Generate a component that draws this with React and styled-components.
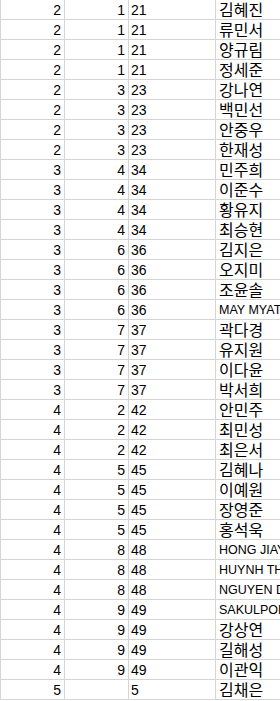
import React from "react";
import styled, { createGlobalStyle } from "styled-components";

const GlobalStyle = createGlobalStyle`
  html, body {
    margin: 0;
    padding: 0;
    background: #ffffff;
    overflow: hidden;
  }
`;

const rows = [
  [2, 1, 21, "김혜진"],
  [2, 1, 21, "류민서"],
  [2, 1, 21, "양규림"],
  [2, 1, 21, "정세준"],
  [2, 3, 23, "강나연"],
  [2, 3, 23, "백민선"],
  [2, 3, 23, "안중우"],
  [2, 3, 23, "한재성"],
  [3, 4, 34, "민주희"],
  [3, 4, 34, "이준수"],
  [3, 4, 34, "황유지"],
  [3, 4, 34, "최승현"],
  [3, 6, 36, "김지은"],
  [3, 6, 36, "오지미"],
  [3, 6, 36, "조윤솔"],
  [3, 6, 36, "MAY MYAT"],
  [3, 7, 37, "곽다경"],
  [3, 7, 37, "유지원"],
  [3, 7, 37, "이다윤"],
  [3, 7, 37, "박서희"],
  [4, 2, 42, "안민주"],
  [4, 2, 42, "최민성"],
  [4, 2, 42, "최은서"],
  [4, 5, 45, "김혜나"],
  [4, 5, 45, "이예원"],
  [4, 5, 45, "장영준"],
  [4, 5, 45, "홍석욱"],
  [4, 8, 48, "HONG JIAYI"],
  [4, 8, 48, "HUYNH THI"],
  [4, 8, 48, "NGUYEN DUC"],
  [4, 9, 49, "SAKULPORN"],
  [4, 9, 49, "강상연"],
  [4, 9, 49, "길해성"],
  [4, 9, 49, "이관익"],
  [5, "", 5, "김채은"],
];

const Sheet = styled.div`
  display: grid;
  grid-template-columns: 65px 64px 87px 1fr;
  grid-auto-rows: 20px;
  width: 280px;
  overflow: hidden;
  font-family: "Liberation Sans", Arial, sans-serif;
  color: #000000;
`;

const Cell = styled.div`
  box-sizing: border-box;
  border-right: 1px solid #d4d4d4;
  border-bottom: 1px solid #d4d4d4;
  border-left: ${(p) => (p.$first ? "1px solid #d4d4d4" : "none")};
  display: flex;
  align-items: flex-end;
  justify-content: ${(p) => (p.$right ? "flex-end" : "flex-start")};
  padding: ${(p) => (p.$right ? "0 3px 1px 0" : "0 0 1px 2px")};
  font-size: 14px;
  line-height: 16px;
  white-space: nowrap;
`;

const NameCell = styled(Cell)`
  border-right: none;
  padding: 0 0 0 3px;
  font-family: ${(p) =>
    p.$latin
      ? '"Liberation Sans", Arial, sans-serif'
      : '"Noto Sans CJK KR", "Noto Sans", sans-serif'};
  font-size: ${(p) => (p.$latin ? "12.5px" : "16px")};
  line-height: ${(p) => (p.$latin ? "17px" : "19px")};
  align-items: ${(p) => (p.$latin ? "flex-end" : "center")};
`;

export default function App() {
  return (
    <>
      <GlobalStyle />
      <Sheet>
        {rows.map((r, i) => {
          const latin = /^[A-Z ]+$/.test(r[3]);
          return (
            <React.Fragment key={i}>
              <Cell $first $right>{r[0]}</Cell>
              <Cell $right>{r[1]}</Cell>
              <Cell>{r[2]}</Cell>
              <NameCell $latin={latin}>{r[3]}</NameCell>
            </React.Fragment>
          );
        })}
      </Sheet>
    </>
  );
}
